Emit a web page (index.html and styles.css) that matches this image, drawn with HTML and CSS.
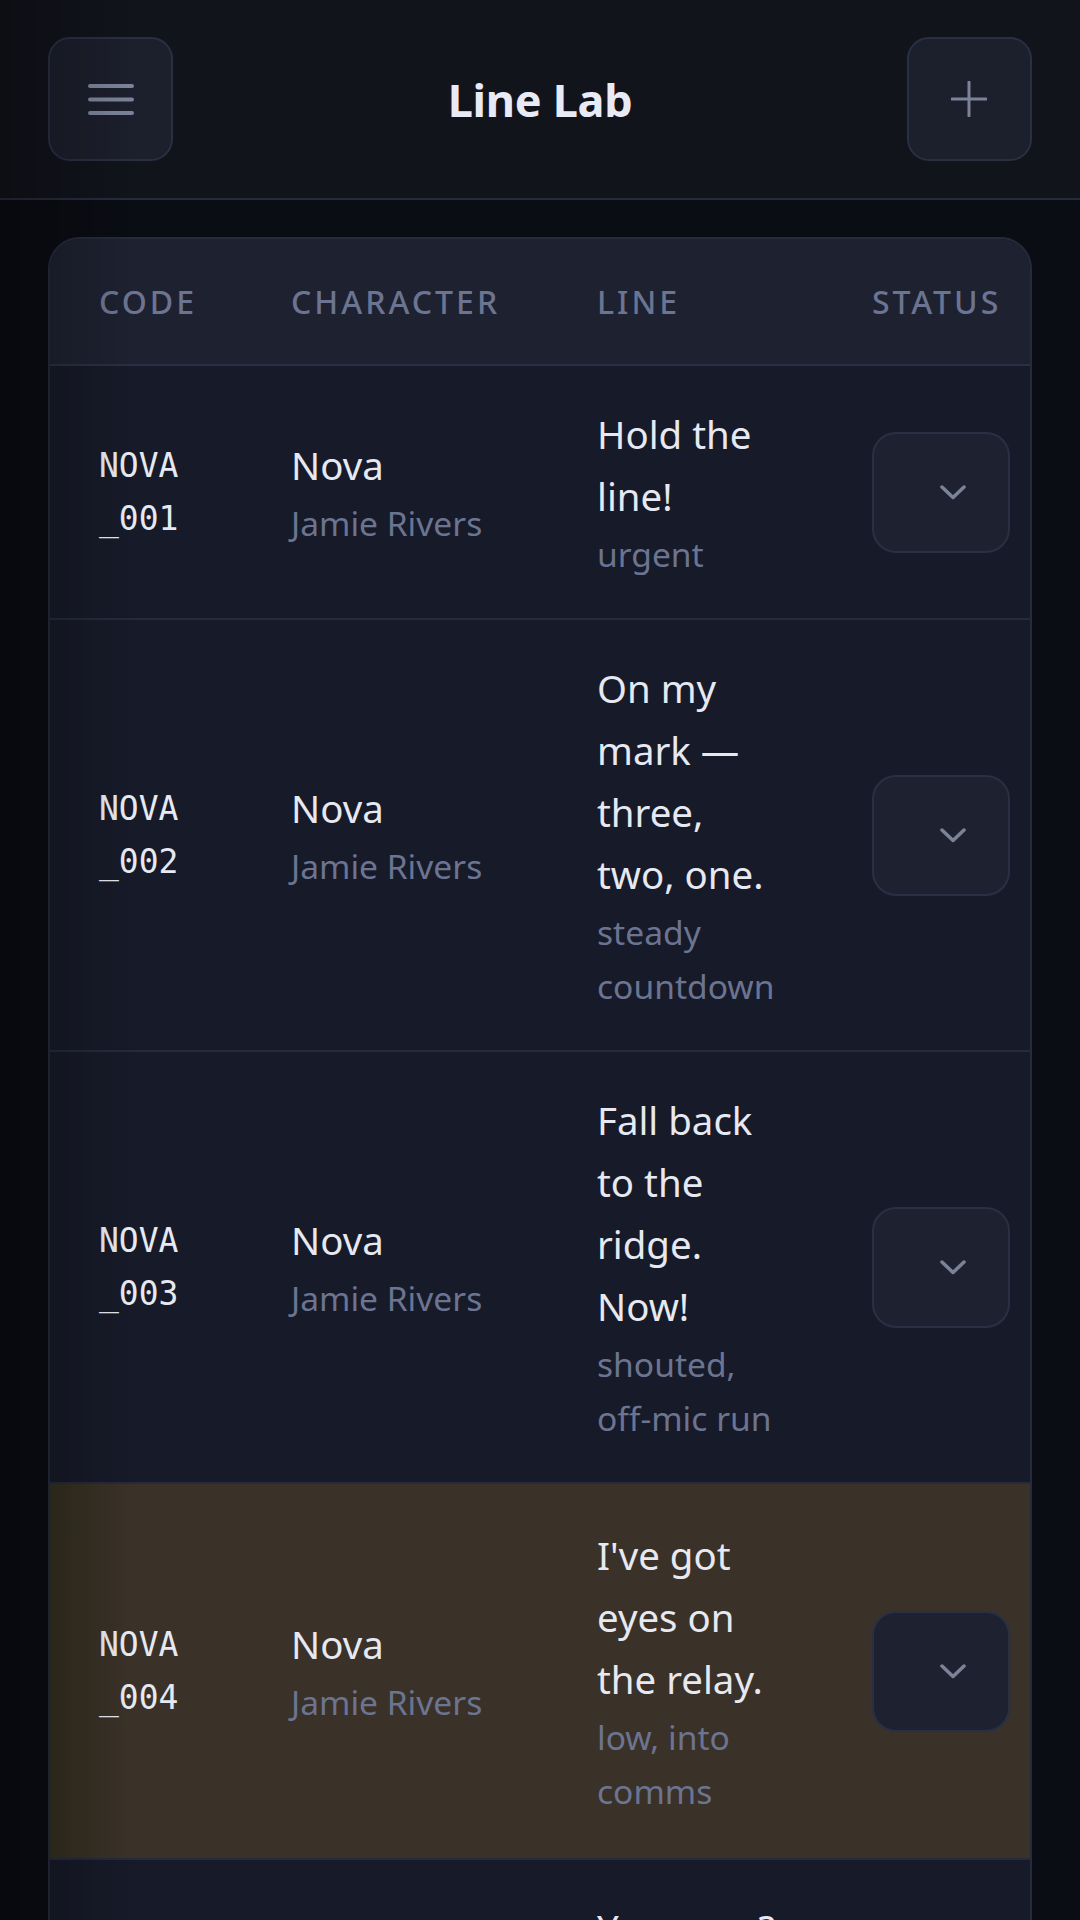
FILE: index.html
```html
<!doctype html>
<html>
<head>
<meta charset="utf-8">
<title>Line Lab</title>
<link rel="stylesheet" href="styles.css">
</head>
<body>
	<header class="topbar">
		<button class="icon-btn" aria-label="Menu">
			<svg width="46" height="31" viewBox="0 0 46 31"><path d="M2 2H44M2 15.5H44M2 29H44" stroke="#7b8399" stroke-width="4" stroke-linecap="round"/></svg>
		</button>
		<h1 class="title">Line Lab</h1>
		<button class="icon-btn" aria-label="Add line">
			<svg width="36" height="36" viewBox="0 0 36 36"><path d="M18 1V35M1 18H35" stroke="#7b8399" stroke-width="3" stroke-linecap="round"/></svg>
		</button>
	</header>

	<main class="sheet">
		<div class="row head">
			<div>Code</div>
			<div>Character</div>
			<div>Line</div>
			<div>Status</div>
		</div>

		<div class="row">
			<div class="code">NOVA_001</div>
			<div class="who"><div class="name">Nova</div><div class="sub">Jamie Rivers</div></div>
			<div class="line"><div class="text">Hold the line!</div><div class="sub">urgent</div></div>
			<div><button class="status"><svg width="26" height="15" viewBox="0 0 26 15"><path d="M2 2L13 12.5L24 2" fill="none" stroke="#7b8399" stroke-width="3.5" stroke-linecap="round" stroke-linejoin="round"/></svg></button></div>
		</div>

		<div class="row">
			<div class="code">NOVA_002</div>
			<div class="who"><div class="name">Nova</div><div class="sub">Jamie Rivers</div></div>
			<div class="line"><div class="text">On my mark — three, two, one.</div><div class="sub">steady countdown</div></div>
			<div><button class="status"><svg width="26" height="15" viewBox="0 0 26 15"><path d="M2 2L13 12.5L24 2" fill="none" stroke="#7b8399" stroke-width="3.5" stroke-linecap="round" stroke-linejoin="round"/></svg></button></div>
		</div>

		<div class="row">
			<div class="code">NOVA_003</div>
			<div class="who"><div class="name">Nova</div><div class="sub">Jamie Rivers</div></div>
			<div class="line"><div class="text">Fall back to the ridge. Now!</div><div class="sub">shouted, off-mic run</div></div>
			<div><button class="status"><svg width="26" height="15" viewBox="0 0 26 15"><path d="M2 2L13 12.5L24 2" fill="none" stroke="#7b8399" stroke-width="3.5" stroke-linecap="round" stroke-linejoin="round"/></svg></button></div>
		</div>

		<div class="row picked">
			<div class="code">NOVA_004</div>
			<div class="who"><div class="name">Nova</div><div class="sub">Jamie Rivers</div></div>
			<div class="line"><div class="text">I've got eyes on the relay.</div><div class="sub">low, into comms</div></div>
			<div><button class="status"><svg width="26" height="15" viewBox="0 0 26 15"><path d="M2 2L13 12.5L24 2" fill="none" stroke="#7b8399" stroke-width="3.5" stroke-linecap="round" stroke-linejoin="round"/></svg></button></div>
		</div>

		<div class="row">
			<div class="code">NOVA_005</div>
			<div class="who"><div class="name">Nova</div><div class="sub">Jamie Rivers</div></div>
			<div class="line"><div class="text">You copy? Say again, over.</div><div class="sub">static, breaking up</div></div>
			<div><button class="status"><svg width="26" height="15" viewBox="0 0 26 15"><path d="M2 2L13 12.5L24 2" fill="none" stroke="#7b8399" stroke-width="3.5" stroke-linecap="round" stroke-linejoin="round"/></svg></button></div>
		</div>
	</main>
</body>
</html>
```

FILE: styles.css
```css
*{margin:0;padding:0;box-sizing:border-box;}
body{
	background:#0b0d14;
	font-family:"Noto Sans","Open Sans",sans-serif;
	color:#e6e9f2;
	overflow:hidden;
}
/* faint shade down the left edge */
body::before{
	content:"";
	position:fixed;
	left:0;top:0;bottom:0;
	width:130px;
	background:linear-gradient(90deg,rgba(0,0,0,.28),rgba(0,0,0,0));
	pointer-events:none;
	z-index:5;
}

.topbar{
	display:flex;
	align-items:center;
	justify-content:space-between;
	padding:37px 48px;
	background:#12141c;
	border-bottom:2px solid #272c3c;
}
.icon-btn{
	display:flex;
	align-items:center;
	justify-content:center;
	width:125px;
	height:124px;
	background:#1c1f2c;
	border:2px solid #2a2f42;
	border-radius:22px;
}
.title{
	font-size:45px;
	font-weight:700;
	color:#e8ebf5;
	letter-spacing:-0.3px;
}

.sheet{
	margin:37px 48px 0;
	background:#171a28;
	border:2px solid #252b3d;
	border-radius:32px 32px 0 0;
	overflow:hidden;
}
.row{
	display:grid;
	grid-template-columns:192px 306px 275px 138px;
	align-items:center;
	padding:37px 20px 37px 49px;
	border-bottom:2px solid #252b3d;
}
.row.head{
	padding:38px 20px 38px 49px;
	background:#1e2130;
	border-bottom-color:#2a3043;
	font-size:32px;
	line-height:49px;
	font-weight:500;
	letter-spacing:3px;
	text-transform:uppercase;
	color:#6b7490;
}
.row.picked{
	padding:40px 20px 40px 49px;
	background:linear-gradient(90deg,#33301f 0,#3a3128 70px);
}

.code{
	width:90px;
	font-family:"DejaVu Sans Mono","Liberation Mono",monospace;
	font-size:33px;
	line-height:53px;
	word-break:break-all;
	color:#e6e9f2;
}
.name,.text{
	font-size:38.4px;
	line-height:62px;
}
.text{width:186px;}
.sub{
	font-size:33.6px;
	line-height:54px;
	color:#6b7490;
}
.line .sub{width:186px;}

.status{
	display:flex;
	align-items:center;
	justify-content:center;
	width:138px;
	height:121px;
	padding-left:24px;
	background:#1e2130;
	border:2px solid #2a3044;
	border-radius:24px;
}
.picked .status{border-color:#293045;}
```
